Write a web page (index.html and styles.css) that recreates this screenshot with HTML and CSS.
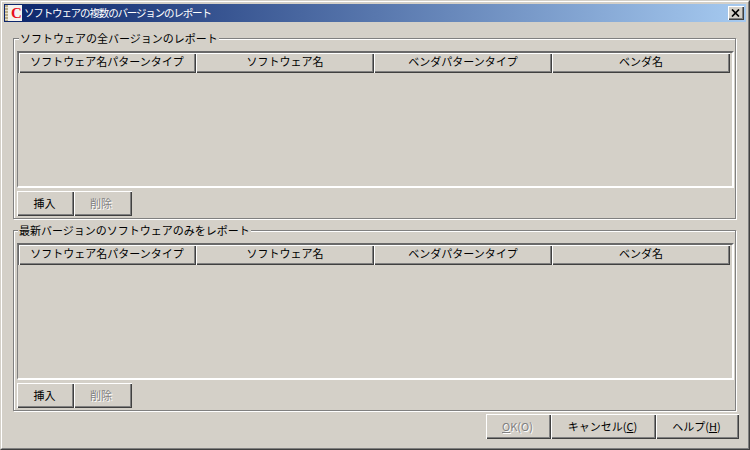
FILE: index.html
```html
<!DOCTYPE html>
<html lang="ja">
<head>
<meta charset="utf-8">
<title>ソフトウェアの複数のバージョンのレポート</title>
<link rel="stylesheet" href="styles.css">
</head>
<body>
<div class="window">
  <div class="window-inner">
    <div class="titlebar">
      <span class="app-icon"><span class="app-stripe"></span><span class="app-letter">C</span></span>
      <span class="title-text">ソフトウェアの複数のバージョンのレポート</span>
      <span class="close-btn">
        <svg width="9" height="8" viewBox="0 0 9 8"><path d="M1 .5 8 7.5M8 .5 1 7.5" fill="none" stroke="#000" stroke-width="1.7"/></svg>
      </span>
    </div>
    <div class="content">
      <section class="group">
        <div class="legend">ソフトウェアの全バージョンのレポート</div>
        <div class="table">
          <div class="thead">
            <div class="th">ソフトウェア名パターンタイプ</div>
            <div class="th">ソフトウェア名</div>
            <div class="th">ベンダパターンタイプ</div>
            <div class="th">ベンダ名</div>
          </div>
        </div>
        <div class="group-actions">
          <button class="btn btn-insert">挿入</button>
          <button class="btn btn-delete disabled">削除</button>
        </div>
      </section>
      <section class="group group-second">
        <div class="legend legend-tight">最新バージョンのソフトウェアのみをレポート</div>
        <div class="table">
          <div class="thead">
            <div class="th">ソフトウェア名パターンタイプ</div>
            <div class="th">ソフトウェア名</div>
            <div class="th">ベンダパターンタイプ</div>
            <div class="th">ベンダ名</div>
          </div>
        </div>
        <div class="group-actions">
          <button class="btn btn-insert">挿入</button>
          <button class="btn btn-delete disabled">削除</button>
        </div>
      </section>
      <div class="dialog-actions">
        <button class="btn btn-ok disabled"><span class="mn">O</span>K(O)</button>
        <button class="btn btn-cancel">キャンセル(<span class="mn">C</span>)</button>
        <button class="btn btn-help">ヘルプ(<span class="mn">H</span>)</button>
      </div>
    </div>
  </div>
</div>
</body>
</html>
```
FILE: styles.css
```css
* { box-sizing: border-box; }
html, body { margin: 0; padding: 0; background: #d4d0c8; }
body {
  width: 750px;
  height: 450px;
  overflow: hidden;
  font-family: "Noto Sans CJK JP", "Liberation Sans", sans-serif;
  font-size: 11px;
  color: #000;
}
.window {
  width: 750px;
  height: 450px;
  border: 1px solid;
  border-color: #d4d0c8 #404040 #404040 #d4d0c8;
}
.window-inner {
  height: 100%;
  border: 1px solid;
  border-color: #fff #808080 #808080 #fff;
  padding: 2px;
  display: flex;
  flex-direction: column;
}
.titlebar {
  height: 18px;
  flex: none;
  display: flex;
  align-items: center;
  padding: 0 2px 0 1px;
  background: linear-gradient(90deg, #0a246a, #a6caf0);
  color: #fff;
}
.app-icon {
  width: 17px;
  height: 16px;
  background: #f4f2ee;
  display: flex;
  flex: none;
  overflow: hidden;
}
.app-stripe {
  width: 3px;
  flex: none;
  background: repeating-linear-gradient(180deg, #b9ab86 0 2px, #e4dec9 2px 3px);
}
.app-letter {
  font-family: "Liberation Serif", serif;
  font-weight: bold;
  font-size: 15px;
  line-height: 16px;
  color: #e8101c;
  margin-left: 3px;
}
.title-text {
  flex: 1;
  margin-left: 2px;
  font-size: 10.5px;
  letter-spacing: -1.15px;
  line-height: 18px;
  white-space: nowrap;
}
.close-btn {
  width: 16px;
  height: 14px;
  flex: none;
  background: #d4d0c8;
  display: flex;
  align-items: center;
  justify-content: center;
  box-shadow: inset 1px 1px 0 #fff, inset -1px -1px 0 #404040, inset -2px -2px 0 #808080;
  padding: 0 1px 1px 0;
}
.content {
  flex: 1;
  display: flex;
  flex-direction: column;
  padding: 16px 10px 0 9px;
}
.group {
  position: relative;
  height: 181px;
  flex: none;
  border: 1px solid #808080;
  box-shadow: inset 1px 1px 0 #fff, 1px 1px 0 #fff;
  padding: 12px 0 0 3px;
}
.group-second { margin-top: 11px; }
.legend {
  position: absolute;
  left: 5px;
  top: -8px;
  height: 14px;
  line-height: 14px;
  padding: 0 1px;
  background: #d4d0c8;
  white-space: nowrap;
}
.legend-tight { left: 4px; }
.table {
  width: 717px;
  height: 137px;
  border-top: 2px solid #696969;
  border-left: 1px solid #808080;
  border-right: 2px solid #fff;
  border-bottom: 2px solid #fff;
}
.thead {
  display: grid;
  grid-template-columns: repeat(4, 178px);
}
.th {
  height: 20px;
  line-height: 17px;
  text-align: center;
  background: #d4d0c8;
  white-space: nowrap;
  box-shadow: inset 1px 1px 0 #fff, inset -1px -1px 0 #404040, inset -2px -2px 0 #808080;
}
.th:first-child {
  box-shadow: inset 1px 0 0 #696969, inset 2px 1px 0 #fff, inset -1px -1px 0 #404040, inset -2px -2px 0 #808080;
}
.group-actions {
  display: flex;
  margin-top: 3px;
}
.btn {
  display: block;
  height: 25px;
  margin: 0;
  padding: 0 0 2px;
  border: 0;
  border-radius: 0;
  background: #d4d0c8;
  color: #000;
  font: inherit;
  line-height: 14px;
  white-space: nowrap;
  box-shadow: inset 1px 1px 0 #fff, inset -1px -1px 0 #404040, inset -2px -2px 0 #808080;
}
.btn-insert { width: 57px; padding-right: 2px; }
.btn-delete { width: 58px; padding-right: 4px; }
.disabled { color: #808080; text-shadow: 1px 1px 0 #fff; }
.dialog-actions {
  display: flex;
  justify-content: flex-end;
  margin-top: 3px;
  margin-right: -3px;
}
.btn-ok { width: 65px; padding-right: 2px; }
.btn-cancel { width: 105px; padding-right: 2px; }
.btn-help { width: 83px; padding-right: 2px; }
.mn { text-decoration: underline; }
```
